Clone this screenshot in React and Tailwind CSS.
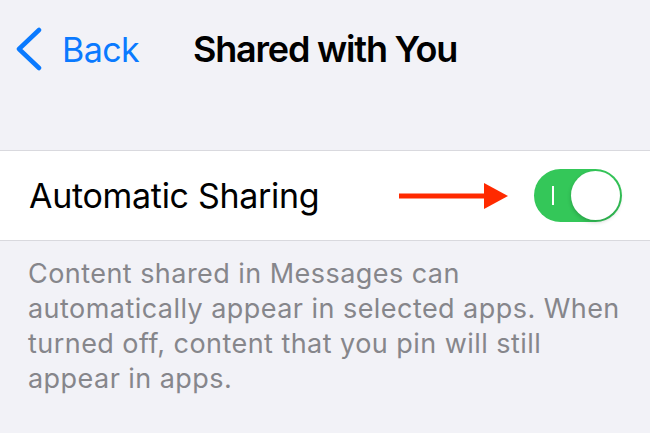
export default function App() {
  return (
    <div className="w-[650px] h-[433px] bg-[#f2f2f7] overflow-hidden" style={{ fontFamily: 'Inter, "Liberation Sans", sans-serif' }}>
      {/* Nav bar */}
      <div className="flex items-center h-[98px] pl-[15px]">
        <svg width="28" height="44" viewBox="0 0 28 44" className="mr-[19px]">
          <path d="M24 3 L4 22 L24 41" fill="none" stroke="#0a7aff" strokeWidth="4.5" strokeLinecap="round" strokeLinejoin="round" />
        </svg>
        <span className="text-[34px] text-[#0a7aff] tracking-[-0.6px]">Back</span>
        <span className="ml-[54px] text-[36px] font-semibold text-black tracking-[-1.2px]">Shared with You</span>
      </div>

      {/* Settings row */}
      <div className="mt-[52px] bg-white border-y border-[#d9d9de] h-[91px] flex items-center pl-[29px] pr-[28px]">
        <span className="text-[34px] text-black tracking-[-0.3px]">Automatic Sharing</span>
        <svg width="110" height="26" viewBox="0 0 110 26" className="ml-auto mr-[25px]">
          <rect x="0" y="10.5" width="88" height="5" fill="#ff2a00" />
          <polygon points="85,0 109,13 85,26" fill="#ff2a00" />
        </svg>
        <div className="relative w-[88px] h-[53px] rounded-full bg-[#34c759]">
          <div className="absolute left-[18px] top-[17px] w-[2px] h-[19px] bg-white" />
          <div className="absolute right-[2px] top-[2px] w-[49px] h-[49px] rounded-full bg-white shadow-[0_2px_4px_rgba(0,0,0,0.2)]" />
        </div>
      </div>

      {/* Footer */}
      <p className="pl-[28px] w-[640px] pt-[15px] text-[27px] leading-[35px] text-[#86868b] tracking-[0.45px]">
        Content shared in Messages can automatically appear in selected apps. When turned off, content that you pin will still appear in apps.
      </p>
    </div>
  )
}
